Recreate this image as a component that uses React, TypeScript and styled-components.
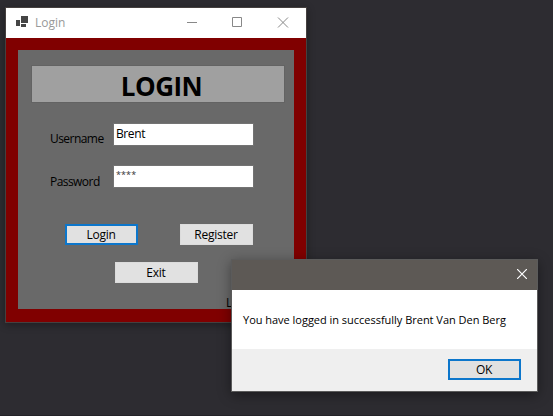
import React from "react";
import styled, { createGlobalStyle } from "styled-components";

const GlobalStyle = createGlobalStyle`
  * { box-sizing: border-box; }
  body {
    margin: 0;
    background: #2d2c31;
    font-family: "Open Sans", "Noto Sans", sans-serif;
    font-size: 12px;
    line-height: 16px;
    color: #000;
  }
`;

const Desktop = styled.main`
  position: relative;
  height: 416px;
  overflow: hidden;
  background: #2d2c31;
  border-bottom: 1px solid #242328;
`;

const LoginWindow = styled.section`
  position: absolute;
  left: 5px;
  top: 7px;
  width: 302px;
  height: 316px;
  display: flex;
  flex-direction: column;
  border: 1px solid #45403f;
  box-shadow: 0 2px 8px rgba(0, 0, 0, 0.32);
`;

const TitleBar = styled.header`
  height: 30px;
  flex: none;
  display: flex;
  align-items: center;
  background: #fff;
  padding-left: 10px;
`;

const Title = styled.span`
  flex: 1;
  margin-left: 7px;
  color: #999;
`;

const CaptionIcon = styled.svg`
  display: block;
  flex: none;
`;

const AppIcon = styled(CaptionIcon)`
  margin-bottom: 2px;
`;

const Frame = styled.div`
  flex: 1;
  padding: 12px 12px 13px;
  background: #800000;
`;

const Panel = styled.form`
  height: 259px;
  padding: 16px 10px 0 14px;
  display: flex;
  flex-direction: column;
  background: #696969;
`;

const Heading = styled.h1`
  margin: 0 0 22px;
  height: 36px;
  flex: none;
  width: 252px;
  background: #a0a0a0;
  box-shadow: 0 0 0 1px #636363;
  text-align: center;
  font-size: 26px;
  line-height: 41px;
  font-weight: 700;
  padding-left: 7px;
  letter-spacing: -0.5px;
`;

const FieldRow = styled.div`
  display: flex;
  height: 21px;
  flex: none;
  margin-bottom: 21px;
`;

const Label = styled.label<{ $drop: number }>`
  width: 82px;
  padding: ${(p) => p.$drop}px 0 0 18px;
  white-space: nowrap;
  letter-spacing: -0.55px;
`;

const Field = styled.div<{ $masked?: boolean }>`
  width: 139px;
  padding: ${(p) => (p.$masked ? 1 : 2)}px 0 0 2px;
  background: #fff;
  box-shadow: 0 0 0 1px #737373;
  color: ${(p) => (p.$masked ? "#333" : "#000")};
  font-size: ${(p) => (p.$masked ? 9 : 12)}px;
  letter-spacing: ${(p) => (p.$masked ? 0.1 : -0.4)}px;
`;

const FormActions = styled.div`
  margin-top: 16px;
`;

const ButtonRow = styled.div<{ $indent: number; $after: number }>`
  display: flex;
  flex: none;
  gap: 42px;
  margin: 0 0 ${(p) => p.$after}px ${(p) => p.$indent}px;
`;

const Button = styled.button<{ $width: number; $primary?: boolean }>`
  width: ${(p) => p.$width}px;
  height: 21px;
  padding: 0 1px 0 0;
  border: ${(p) => (p.$primary ? "2px solid #0c76cb" : "1px solid #dcdcdc")};
  background: #e1e1e1;
  color: #000;
  font: inherit;
  line-height: ${(p) => (p.$primary ? 17 : 19)}px;
  letter-spacing: -0.25px;
`;

const Status = styled.span`
  align-self: flex-end;
  width: 58px;
`;

const Dialog = styled.section`
  position: absolute;
  left: 231px;
  top: 259px;
  width: 307px;
  height: 133px;
  display: flex;
  flex-direction: column;
  border: 1px solid #5b5b5b;
  background: #fff;
  box-shadow: 0 3px 12px rgba(0, 0, 0, 0.4);
`;

const DialogBar = styled.header`
  height: 30px;
  flex: none;
  display: flex;
  justify-content: flex-end;
  align-items: center;
  padding: 0 10px 2px 0;
  background: #5d5955;
`;

const Message = styled.p`
  margin: 0;
  height: 59px;
  padding: 22px 0 0 11px;
  white-space: nowrap;
  font-size: 11px;
  letter-spacing: -0.02px;
`;

const DialogFooter = styled.footer`
  flex: 1;
  display: flex;
  justify-content: flex-end;
  align-items: flex-start;
  padding: 10px 16px 0 0;
  background: #efefef;
`;

export default function App() {
  return (
    <>
      <GlobalStyle />
      <Desktop>
        <LoginWindow>
          <TitleBar>
            <AppIcon width="12" height="12" viewBox="0 0 12 12" shapeRendering="crispEdges">
              <path fill="#454545" d="M0 4h4v6H0zM5 0h7v7H5zM5 8h5v3H5z" />
            </AppIcon>
            <Title>Login</Title>
            <CaptionIcon width="120" height="30" viewBox="0 0 120 30" fill="none" stroke="#888">
              <path d="M1 14.5h10M46.5 9.5h9v9h-9zM92 9.5l10 10M102 9.5l-10 10" />
            </CaptionIcon>
          </TitleBar>
          <Frame>
            <Panel>
              <Heading>LOGIN</Heading>
              <FieldRow>
                <Label $drop={7}>Username</Label>
                <Field>Brent</Field>
              </FieldRow>
              <FieldRow>
                <Label $drop={8}>Password</Label>
                <Field $masked>****</Field>
              </FieldRow>
              <FormActions>
                <ButtonRow $indent={33} $after={17}>
                  <Button type="button" $width={73} $primary>Login</Button>
                  <Button type="button" $width={73}>Register</Button>
                </ButtonRow>
                <ButtonRow $indent={83} $after={12}>
                  <Button type="button" $width={83}>Exit</Button>
                </ButtonRow>
              </FormActions>
              <Status>L</Status>
            </Panel>
          </Frame>
        </LoginWindow>
        <Dialog>
          <DialogBar>
            <CaptionIcon width="10" height="10" viewBox="0 0 10 10" stroke="#fff" strokeWidth="1.2">
              <path d="M0 0l10 10M10 0L0 10" />
            </CaptionIcon>
          </DialogBar>
          <Message>You have logged in successfully Brent Van Den Berg</Message>
          <DialogFooter>
            <Button type="button" $width={73} $primary>OK</Button>
          </DialogFooter>
        </Dialog>
      </Desktop>
    </>
  );
}
